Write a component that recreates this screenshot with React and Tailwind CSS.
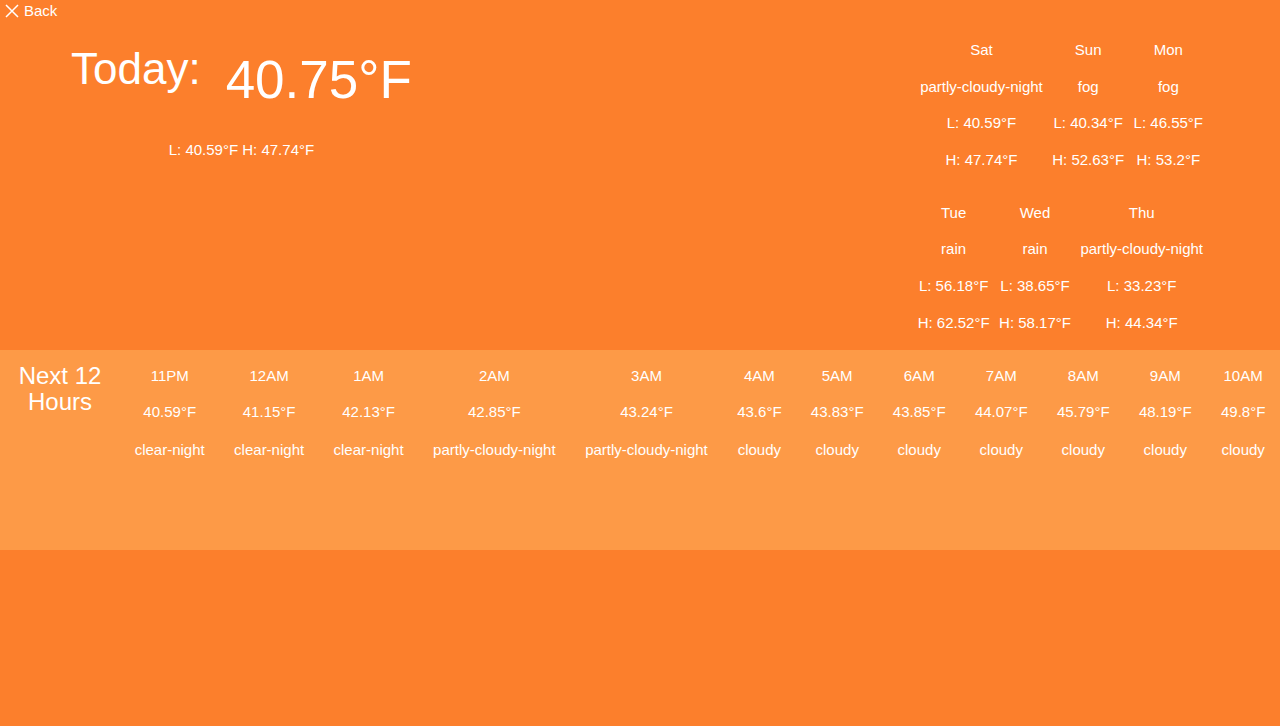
import { useState } from "react";

const daily = [
  [
    { day: "Sat", summary: "partly-cloudy-night", low: "40.59°F", high: "47.74°F" },
    { day: "Sun", summary: "fog", low: "40.34°F", high: "52.63°F" },
    { day: "Mon", summary: "fog", low: "46.55°F", high: "53.2°F" },
  ],
  [
    { day: "Tue", summary: "rain", low: "56.18°F", high: "62.52°F" },
    { day: "Wed", summary: "rain", low: "38.65°F", high: "58.17°F" },
    { day: "Thu", summary: "partly-cloudy-night", low: "33.23°F", high: "44.34°F" },
  ],
];

const hourly = [
  { time: "11PM", temp: "40.59°F", summary: "clear-night" },
  { time: "12AM", temp: "41.15°F", summary: "clear-night" },
  { time: "1AM", temp: "42.13°F", summary: "clear-night" },
  { time: "2AM", temp: "42.85°F", summary: "partly-cloudy-night" },
  { time: "3AM", temp: "43.24°F", summary: "partly-cloudy-night" },
  { time: "4AM", temp: "43.6°F", summary: "cloudy" },
  { time: "5AM", temp: "43.83°F", summary: "cloudy" },
  { time: "6AM", temp: "43.85°F", summary: "cloudy" },
  { time: "7AM", temp: "44.07°F", summary: "cloudy" },
  { time: "8AM", temp: "45.79°F", summary: "cloudy" },
  { time: "9AM", temp: "48.19°F", summary: "cloudy" },
  { time: "10AM", temp: "49.8°F", summary: "cloudy" },
];

const App = () => {
  const [current] = useState({ temp: "40.75°F", low: "40.59°F", high: "47.74°F" });

  return (
    <div className="min-h-screen bg-[#fc7f2c] text-white font-['Liberation_Sans',Arial,sans-serif]">
      {/* Top: today + week */}
      <div className="h-[350px]">
        {/* Back */}
        <a href="#" className="flex items-center h-[22px] pl-[5px] gap-[5px] text-[15px]">
          <svg width="14" height="14" viewBox="0 0 14 14" fill="none" stroke="white" strokeWidth="1.5">
            <path d="M1 1 L13 13 M13 1 L1 13" />
          </svg>
          Back
        </a>

        <div className="flex justify-between">
          {/* Today */}
          <div className="pl-[71px] flex flex-col items-center self-start">
            <div className="flex items-start gap-[25px]">
              <span className="mt-[25px] text-[44px] leading-none">Today:</span>
              <span className="mt-[31.4px] text-[53px] leading-none">{current.temp}</span>
            </div>
            <p className="mt-[35px] text-[15px] leading-[17px]">
              L: {current.low} H: {current.high}
            </p>
          </div>

          {/* Week */}
          <div className="pr-[77px] pt-[10px] flex flex-col items-end gap-[16px]">
            {daily.map((row, i) => (
              <div key={i} className="flex gap-[9.5px]">
                {row.map((d) => (
                  <div key={d.day} className="text-center text-[15px] leading-[36.67px] whitespace-nowrap">
                    <div>{d.day}</div>
                    <div>{d.summary}</div>
                    <div>L: {d.low}</div>
                    <div>H: {d.high}</div>
                  </div>
                ))}
              </div>
            ))}
          </div>
        </div>
      </div>

      {/* Next 12 hours */}
      <div className="h-[200px] bg-[#fd9a47]">
        <table className="w-full">
          <tbody>
            <tr>
              <th className="w-[120px] align-top pt-[13px] text-[24px] leading-[26px] font-normal">
                Next 12
                <br />
                Hours
              </th>
              {hourly.map((h) => (
                <td key={h.time} className="align-top pt-[8px] px-[14.5px] text-center text-[15px] whitespace-nowrap">
                  <div className="leading-[36px]">{h.time}</div>
                  <div className="leading-[36px]">{h.temp}</div>
                  <div className="mt-[2px] leading-[36px]">{h.summary}</div>
                </td>
              ))}
            </tr>
          </tbody>
        </table>
      </div>
    </div>
  );
};

export default App;
